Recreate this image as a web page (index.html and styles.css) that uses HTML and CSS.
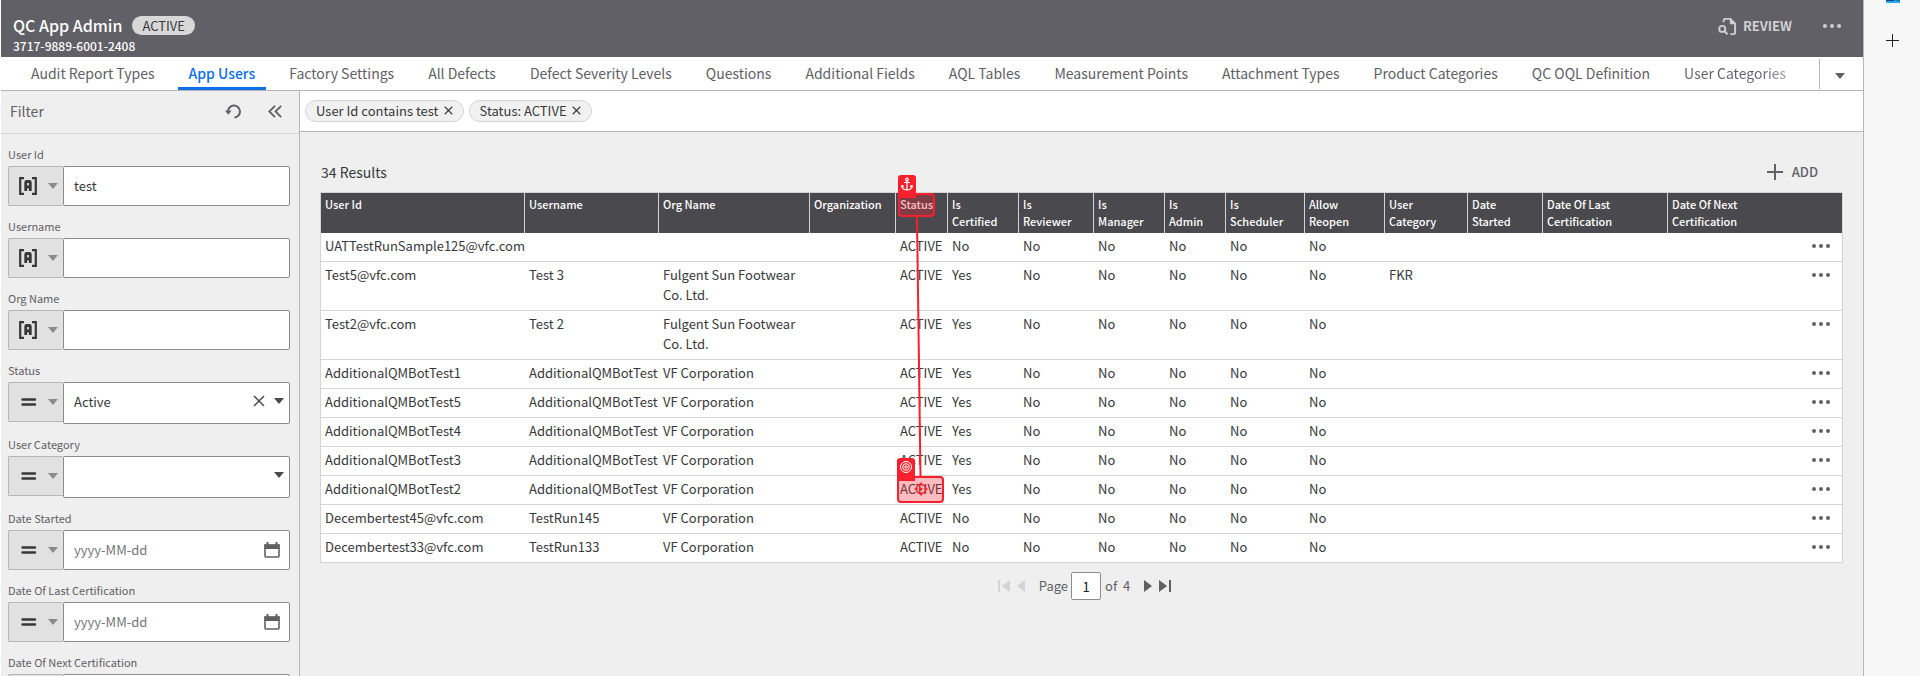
FILE: index.html
```html
<!DOCTYPE html>
<html lang="en">
<head>
<meta charset="utf-8">
<title>QC App Admin</title>
<link rel="stylesheet" href="styles.css">
</head>
<body>
<svg class="defs" aria-hidden="true">
  <symbol id="i-text" viewBox="0 0 18 18"><path d="M5 1.200H1.200V16.800H5M13 1.200h3.800V16.800H13" fill="none" stroke="currentColor" stroke-width="2.200"/><path d="M6.700 14V5.500Q6.700 4.500 7.700 4.500h2.600Q11.300 4.500 11.300 5.500V14M6.700 10h4.600" fill="none" stroke="currentColor" stroke-width="2.800"/></symbol>
  <symbol id="i-eq" viewBox="0 0 18 18"><path d="M3.500 6.500h12.500M3.500 11.500h12.500" stroke="currentColor" stroke-width="2.400" stroke-linecap="round"/></symbol>
  <symbol id="i-down" viewBox="0 0 10 6"><path d="M0 0h10L5 6z" fill="currentColor"/></symbol>
  <symbol id="i-x" viewBox="0 0 12 12"><path d="M1 1l10 10M11 1L1 11" stroke="currentColor" stroke-width="1.500"/></symbol>
  <symbol id="i-cal" viewBox="0 0 16 16"><path d="M1 3h14v11q0 1-1 1H2q-1 0-1-1z" fill="none" stroke="currentColor" stroke-width="1.600"/><path d="M0.500 2.500h15V7H.5zM2.500 0h2v3h-2zM11.500 0h2v3h-2z" fill="currentColor"/></symbol>
  <symbol id="i-dots" viewBox="0 0 18 4"><circle cx="2" cy="2" r="2" fill="currentColor"/><circle cx="9" cy="2" r="2" fill="currentColor"/><circle cx="16" cy="2" r="2" fill="currentColor"/></symbol>
</svg>
<div class="shell">
  <div class="app">
    <header class="header">
      <div>
        <div class="title-row"><h1 class="title">QC App Admin</h1><span class="badge">ACTIVE</span></div>
        <div class="code">3717-9889-6001-2408</div>
      </div>
      <div class="header-actions">
        <button class="review"><svg class="review-icon" viewBox="0 0 20 19" fill="none" stroke="currentColor"><path d="M6 5V3q0-1.500 1.500-1.500H13L18 6.500V16q0 1.500-1.500 1.500H13" stroke-width="2"/><path d="M12.500 1v6H18z" fill="currentColor" stroke="none"/><circle cx="4.500" cy="12" r="3.200" stroke-width="2"/><path d="M6.800 14.300L10 17.800" stroke-width="2.200"/></svg>REVIEW</button>
        <button class="plain" aria-label="More actions"><svg class="dots"><use href="#i-dots"/></svg></button>
      </div>
    </header>
    <nav class="tabs">
      <div class="tab-list">
        <a class="tab" href="#">Audit Report Types</a>
        <a class="tab tab-active" href="#">App Users</a>
        <a class="tab" href="#">Factory Settings</a>
        <a class="tab" href="#">All Defects</a>
        <a class="tab" href="#">Defect Severity Levels</a>
        <a class="tab" href="#">Questions</a>
        <a class="tab" href="#">Additional Fields</a>
        <a class="tab" href="#">AQL Tables</a>
        <a class="tab" href="#">Measurement Points</a>
        <a class="tab" href="#">Attachment Types</a>
        <a class="tab" href="#">Product Categories</a>
        <a class="tab" href="#">QC OQL Definition</a>
        <a class="tab tab-fade" href="#">User Categories</a>
      </div>
      <button class="tab-more" aria-label="More tabs"><svg class="caret"><use href="#i-down"/></svg></button>
    </nav>
    <div class="body">
      <aside class="filter">
        <div class="filter-head">
          <h2 class="filter-title">Filter</h2>
          <button class="plain" aria-label="Reset"><svg class="reset-icon" viewBox="0 0 17 15" fill="none" stroke="currentColor" stroke-width="2"><path d="M3 8A6 6 0 1 1 9.500 13.500"/><path d="M0 6.500h6.600L3.300 10.800z" fill="currentColor" stroke="none"/></svg></button>
          <button class="plain" aria-label="Collapse"><svg class="collapse-icon" viewBox="0 0 14 13" fill="none" stroke="currentColor" stroke-width="1.800"><path d="M7 .8L1.300 6.500L7 12.200M13.200 .8L7.500 6.500L13.200 12.200"/></svg></button>
        </div>
        <form class="fields">
          <div class="field"><label class="label" for="f1">User Id</label><div class="control"><button type="button" class="op" aria-label="Contains"><svg class="op-icon"><use href="#i-text"/></svg><svg class="op-caret"><use href="#i-down"/></svg></button><input class="box" id="f1" type="text" value="test"></div></div>
          <div class="field"><label class="label" for="f2">Username</label><div class="control"><button type="button" class="op" aria-label="Contains"><svg class="op-icon"><use href="#i-text"/></svg><svg class="op-caret"><use href="#i-down"/></svg></button><input class="box" id="f2" type="text"></div></div>
          <div class="field"><label class="label" for="f3">Org Name</label><div class="control"><button type="button" class="op" aria-label="Contains"><svg class="op-icon"><use href="#i-text"/></svg><svg class="op-caret"><use href="#i-down"/></svg></button><input class="box" id="f3" type="text"></div></div>
          <div class="field"><label class="label" for="f4">Status</label><div class="control"><button type="button" class="op" aria-label="Equals"><svg class="op-icon"><use href="#i-eq"/></svg><svg class="op-caret"><use href="#i-down"/></svg></button><select class="box box-select" id="f4"><option>Active</option></select><span class="adorn"><button type="button" class="plain" aria-label="Clear status"><svg class="clear"><use href="#i-x"/></svg></button><svg class="caret"><use href="#i-down"/></svg></span></div></div>
          <div class="field"><label class="label" for="f5">User Category</label><div class="control"><button type="button" class="op" aria-label="Equals"><svg class="op-icon"><use href="#i-eq"/></svg><svg class="op-caret"><use href="#i-down"/></svg></button><select class="box box-select" id="f5"><option></option></select><span class="adorn"><svg class="caret"><use href="#i-down"/></svg></span></div></div>
          <div class="field"><label class="label" for="f6">Date Started</label><div class="control"><button type="button" class="op" aria-label="Equals"><svg class="op-icon"><use href="#i-eq"/></svg><svg class="op-caret"><use href="#i-down"/></svg></button><input class="box" id="f6" type="text" placeholder="yyyy-MM-dd"><span class="adorn adorn-date"><svg class="cal"><use href="#i-cal"/></svg></span></div></div>
          <div class="field"><label class="label" for="f7">Date Of Last Certification</label><div class="control"><button type="button" class="op" aria-label="Equals"><svg class="op-icon"><use href="#i-eq"/></svg><svg class="op-caret"><use href="#i-down"/></svg></button><input class="box" id="f7" type="text" placeholder="yyyy-MM-dd"><span class="adorn adorn-date"><svg class="cal"><use href="#i-cal"/></svg></span></div></div>
          <div class="field"><label class="label" for="f8">Date Of Next Certification</label><div class="control"><button type="button" class="op" aria-label="Equals"></button><input class="box" id="f8" type="text"></div></div>
        </form>
      </aside>
      <main class="main">
        <div class="chips">
          <span class="chip">User Id contains test<button class="plain" aria-label="Remove User Id filter"><svg class="chip-x"><use href="#i-x"/></svg></button></span>
          <span class="chip">Status: ACTIVE<button class="plain" aria-label="Remove Status filter"><svg class="chip-x"><use href="#i-x"/></svg></button></span>
        </div>
        <section class="content">
          <div class="toolbar"><span class="results">34 Results</span><button class="add"><svg class="add-icon" viewBox="0 0 16 16"><path d="M8 0v16M0 8h16" stroke="currentColor" stroke-width="2"/></svg>ADD</button></div>
          <div class="grid">
            <table class="table">
              <colgroup><col class="c-id"><col class="c-name"><col class="c-org"><col class="c-orgn"><col class="c-status"><col class="c-flag"><col class="c-mid"><col class="c-flag"><col class="c-admin"><col class="c-sched"><col class="c-allow"><col class="c-cat"><col class="c-mid"><col class="c-date"><col></colgroup>
              <thead><tr><th>User Id</th><th>Username</th><th>Org Name</th><th>Organization</th><th>Status</th><th>Is<br>Certified</th><th>Is<br>Reviewer</th><th>Is<br>Manager</th><th>Is<br>Admin</th><th>Is<br>Scheduler</th><th>Allow<br>Reopen</th><th>User<br>Category</th><th>Date<br>Started</th><th>Date Of Last<br>Certification</th><th>Date Of Next<br>Certification</th></tr></thead>
              <tbody>
                <tr><td>UATTestRunSample125@vfc.com</td><td></td><td></td><td></td><td>ACTIVE</td><td>No</td><td>No</td><td>No</td><td>No</td><td>No</td><td>No</td><td></td><td></td><td></td><td class="menu"><button class="plain" aria-label="Row menu"><svg class="dots"><use href="#i-dots"/></svg></button></td></tr>
                <tr><td>Test5@vfc.com</td><td>Test 3</td><td class="wrap">Fulgent Sun Footwear Co. Ltd.</td><td></td><td>ACTIVE</td><td>Yes</td><td>No</td><td>No</td><td>No</td><td>No</td><td>No</td><td>FKR</td><td></td><td></td><td class="menu"><button class="plain" aria-label="Row menu"><svg class="dots"><use href="#i-dots"/></svg></button></td></tr>
                <tr><td>Test2@vfc.com</td><td>Test 2</td><td class="wrap">Fulgent Sun Footwear Co. Ltd.</td><td></td><td>ACTIVE</td><td>Yes</td><td>No</td><td>No</td><td>No</td><td>No</td><td>No</td><td></td><td></td><td></td><td class="menu"><button class="plain" aria-label="Row menu"><svg class="dots"><use href="#i-dots"/></svg></button></td></tr>
                <tr><td>AdditionalQMBotTest1</td><td>AdditionalQMBotTest</td><td>VF Corporation</td><td></td><td>ACTIVE</td><td>Yes</td><td>No</td><td>No</td><td>No</td><td>No</td><td>No</td><td></td><td></td><td></td><td class="menu"><button class="plain" aria-label="Row menu"><svg class="dots"><use href="#i-dots"/></svg></button></td></tr>
                <tr><td>AdditionalQMBotTest5</td><td>AdditionalQMBotTest</td><td>VF Corporation</td><td></td><td>ACTIVE</td><td>Yes</td><td>No</td><td>No</td><td>No</td><td>No</td><td>No</td><td></td><td></td><td></td><td class="menu"><button class="plain" aria-label="Row menu"><svg class="dots"><use href="#i-dots"/></svg></button></td></tr>
                <tr><td>AdditionalQMBotTest4</td><td>AdditionalQMBotTest</td><td>VF Corporation</td><td></td><td>ACTIVE</td><td>Yes</td><td>No</td><td>No</td><td>No</td><td>No</td><td>No</td><td></td><td></td><td></td><td class="menu"><button class="plain" aria-label="Row menu"><svg class="dots"><use href="#i-dots"/></svg></button></td></tr>
                <tr><td>AdditionalQMBotTest3</td><td>AdditionalQMBotTest</td><td>VF Corporation</td><td></td><td>ACTIVE</td><td>Yes</td><td>No</td><td>No</td><td>No</td><td>No</td><td>No</td><td></td><td></td><td></td><td class="menu"><button class="plain" aria-label="Row menu"><svg class="dots"><use href="#i-dots"/></svg></button></td></tr>
                <tr><td>AdditionalQMBotTest2</td><td>AdditionalQMBotTest</td><td>VF Corporation</td><td></td><td>ACTIVE</td><td>Yes</td><td>No</td><td>No</td><td>No</td><td>No</td><td>No</td><td></td><td></td><td></td><td class="menu"><button class="plain" aria-label="Row menu"><svg class="dots"><use href="#i-dots"/></svg></button></td></tr>
                <tr><td>Decembertest45@vfc.com</td><td>TestRun145</td><td>VF Corporation</td><td></td><td>ACTIVE</td><td>No</td><td>No</td><td>No</td><td>No</td><td>No</td><td>No</td><td></td><td></td><td></td><td class="menu"><button class="plain" aria-label="Row menu"><svg class="dots"><use href="#i-dots"/></svg></button></td></tr>
                <tr><td>Decembertest33@vfc.com</td><td>TestRun133</td><td>VF Corporation</td><td></td><td>ACTIVE</td><td>No</td><td>No</td><td>No</td><td>No</td><td>No</td><td>No</td><td></td><td></td><td></td><td class="menu"><button class="plain" aria-label="Row menu"><svg class="dots"><use href="#i-dots"/></svg></button></td></tr>
              </tbody>
            </table>
            <!-- anchor and target markers joined by a line -->
            <svg class="marks" viewBox="0 0 60 340" fill="none">
              <path d="M8 28V8q0-3 3-3h12q3 0 3 3v20z" fill="#f8202d"/>
              <rect x="9" y="24" width="35" height="22" rx="3" fill="#f8202d" fill-opacity=".3" stroke="#f8202d" stroke-width="2"/>
              <g stroke="#fff" stroke-width="1.200"><circle cx="17" cy="9.500" r="1.300"/><path d="M17 11v9M14 12.500h6M12 16q.5 4 5 4t5-4M11.500 17.500l.5-2 2 1M22.500 17.500l-.5-2-2 1"/></g>
              <path d="M27 47L30.500 306" stroke="#f8202d" stroke-width="2"/>
              <path d="M7 311V291q0-3 3-3h12q3 0 3 3v20z" fill="#f8202d"/>
              <rect x="8" y="307" width="45" height="25" rx="3" fill="#f8202d" fill-opacity=".3" stroke="#f8202d" stroke-width="2"/>
              <g stroke="#fff"><circle cx="16" cy="297" r="5.500"/><circle cx="16" cy="297" r="3.300"/><circle cx="16" cy="297" r="1.200"/></g>
              <g stroke="#f8202d" stroke-width="1.600"><circle cx="31" cy="319" r="4.600"/><path d="M31 312.500v3M31 322.500v3M24.500 319h3M34.500 319h3"/></g><circle cx="31" cy="319" r="1.500" fill="#f8202d"/>
            </svg>
          </div>
          <div class="pager">
            <button class="plain page-off" aria-label="First page"><svg class="p-end" viewBox="0 0 12 12"><path d="M0 0h2v12H0zM12 0v12L4 6z" fill="currentColor"/></svg></button>
            <button class="plain page-off" aria-label="Previous page"><svg class="p-step" viewBox="0 0 8 12"><path d="M8 0v12L0 6z" fill="currentColor"/></svg></button>
            <label class="page-label" for="page">Page</label><input class="page-input" id="page" type="text" value="1"><span>of&nbsp; 4</span>
            <button class="plain page-next" aria-label="Next page"><svg class="p-step" viewBox="0 0 8 12"><path d="M0 0v12L8 6z" fill="currentColor"/></svg></button>
            <button class="plain" aria-label="Last page"><svg class="p-end" viewBox="0 0 12 12"><path d="M10 0h2v12h-2zM0 0v12L8 6z" fill="currentColor"/></svg></button>
          </div>
        </section>
      </main>
    </div>
  </div>
  <div class="rail">
    <svg class="rail-app" viewBox="0 0 14 3"><path d="M0 0h14v3H0z" fill="#28a8ea"/><path d="M0 0h8v1H0z" fill="#14447d"/><path d="M8 0h6v2z" fill="#0f78d4"/></svg>
    <button class="plain rail-add" aria-label="Add"><svg class="rail-plus" viewBox="0 0 13 13"><path d="M6.500 0v13M0 6.500h13" stroke="currentColor"/></svg></button>
  </div>
</div>
</body>
</html>
```
FILE: styles.css
```css
* { box-sizing: border-box; }
body { margin: 0; font-family: "Noto Sans CJK SC", "Noto Sans", sans-serif; font-size: 13px; line-height: 20px; color: #38383b; background: #fff; }
button, input, select { font: inherit; color: inherit; }
svg { display: block; flex: none; }
.defs { position: absolute; width: 0; height: 0; }
.plain { display: flex; padding: 0; border: 0; background: none; color: inherit; }
.shell { display: flex; height: 100vh; overflow: hidden; padding-left: 1px; }
.app { flex: 1; min-width: 0; display: flex; flex-direction: column; border-right: 1px solid #b6b6b6; }

.header { flex: none; display: flex; justify-content: space-between; padding: 13px 22px 1px 12px; background: #616066; color: #fff; }
.title-row { display: flex; align-items: center; gap: 10px; height: 23px; }
.title { margin: 0; font-size: 16px; font-weight: 500; line-height: 22px; }
.badge { margin-top: 2px; padding: 0 10px; border-radius: 10px; background: #d8d8d8; color: #38383b; line-height: 19px; }
.code { font-size: 12px; font-weight: 500; line-height: 20px; }
.header-actions { display: flex; align-items: center; gap: 31px; height: 26px; color: #d0d0d2; }
.review { display: flex; align-items: center; gap: 6px; padding: 0; border: 0; background: none; font-weight: 700; }
.review-icon { width: 19px; height: 19px; }
.dots { width: 18px; height: 4px; }

.tabs { flex: none; display: flex; justify-content: space-between; height: 34px; border-bottom: 1px solid #b6b6b6; background: #fff; }
.tab-list { display: flex; gap: 12px; min-width: 0; padding-left: 19px; overflow: hidden; white-space: nowrap; }
.tab { padding: 4px 11px 0; color: #616066; font-size: 14px; line-height: 24px; text-decoration: none; border-bottom: 3px solid transparent; }
.tab-active { color: #0a6fe8; font-weight: 500; border-color: #0a6fe8; }
.tab-fade { background: linear-gradient(90deg, #616066 70%, #b8b8ba); background-clip: text; color: transparent; }
.tab-more { flex: none; width: 44px; margin: 2px 0 1px; padding: 4px 0 0 15px; border: 0; border-left: 1px solid #b6b6b6; background: none; color: #616066; }

.body { flex: 1; min-height: 0; display: flex; }
.filter { flex: none; width: 299px; border-right: 1px solid #b6b6b6; background: #efefef; overflow: hidden; }
.filter-head { display: flex; align-items: center; gap: 26px; height: 43px; padding: 0 17px 2px 9px; border-bottom: 1px solid #d4d4d4; color: #616066; }
.filter-title { flex: 1; margin: 0; font-size: 14px; font-weight: 400; }
.reset-icon { width: 17px; height: 15px; }
.collapse-icon { width: 14px; height: 13px; }
.fields { display: flex; flex-direction: column; gap: 13px; padding: 13px 9px 0 7px; }
.field { display: flex; flex-direction: column; gap: 5px; }
.label { font-size: 11px; line-height: 14px; color: #616066; }
.control { display: flex; align-items: flex-start; position: relative; }
.op { flex: none; display: flex; align-items: center; gap: 11px; width: 55px; height: 40px; padding: 0 5px 0 10px; border: 1px solid #b6b6b6; border-right: 0; border-radius: 2px 0 0 2px; background: #e1e1e1; }
.op-icon { width: 18px; height: 18px; }
.op-caret { width: 10px; height: 6px; color: #8a8a92; }
.box { flex: 1; min-width: 0; height: 40px; padding: 0 10px 2px; border: 1px solid #8c8c90; border-radius: 2px; background: #fff; }
.box::placeholder { color: #75757a; }
.box-select { appearance: none; height: 42px; }
.adorn { position: absolute; top: 0; right: 6px; height: 38px; display: flex; align-items: center; gap: 9px; color: #4a494e; }
.adorn-date { right: 10px; height: 40px; color: #616066; }
.clear { width: 12px; height: 12px; }
.caret { width: 10px; height: 6px; }
.cal { width: 16px; height: 16px; }

.main { flex: 1; min-width: 0; display: flex; flex-direction: column; background: #efefef; }
.chips { flex: none; display: flex; gap: 5px; height: 41px; padding: 9px 5px; border-bottom: 1px solid #b6b6b6; background: #fff; }
.chip { display: flex; align-items: center; gap: 5px; height: 22px; padding: 0 10px 1px; border: 1px solid #d4d4d4; border-radius: 11px; background: #f1f1f1; }
.chip-x { width: 9px; height: 9px; }
.content { padding: 28px 20px 0; }
.toolbar { display: flex; align-items: center; justify-content: space-between; height: 24px; margin-bottom: 8px; padding: 0 25px 0 1px; }
.results { font-size: 14px; }
.add { display: flex; align-items: center; gap: 9px; padding: 0; border: 0; background: none; color: #616066; font-weight: 500; }
.add-icon { width: 16px; height: 16px; }
.grid { position: relative; border: 1px solid #d4d4d4; border-bottom: 0; }
.table { width: 100%; table-layout: fixed; border-collapse: separate; border-spacing: 0; background: #fff; }
.c-id { width: 204px; } .c-name { width: 134px; } .c-org { width: 151px; } .c-orgn { width: 86px; }
.c-status { width: 52px; } .c-flag { width: 71px; } .c-mid { width: 75px; } .c-admin { width: 61px; }
.c-sched { width: 79px; } .c-allow { width: 80px; } .c-cat { width: 83px; } .c-date { width: 125px; }
th { height: 40px; padding: 3px 0 3px 4px; border-right: 1px solid #d4d4d4; background: #4a494e; color: #fff; font-size: 11px; font-weight: 500; line-height: 17px; text-align: left; vertical-align: top; white-space: nowrap; }
th:last-child { border-right: 0; }
td { padding: 3px 0 5px 4px; border-bottom: 1px solid #d4d4d4; vertical-align: top; white-space: nowrap; }
td.wrap { padding-right: 5px; white-space: normal; }
td.menu { padding: 11px 12px 0; color: #616066; }
td.menu .plain { margin-left: auto; }
.marks { position: absolute; left: 569px; top: -23px; width: 60px; height: 340px; pointer-events: none; }

.pager { display: flex; align-items: center; justify-content: center; gap: 7px; padding: 9px 0 0 6px; color: #616066; }
.page-off { color: #d4d4d4; }
.page-label { margin-left: 7px; }
.page-input { width: 30px; height: 28px; margin: 0 -3px 0 -4px; padding: 0; border: 1px solid #8c8c90; border-radius: 2px; background: #fff; color: #111; text-align: center; }
.page-next { margin-left: 7px; }
.p-end { width: 12px; height: 12px; }
.p-step { width: 8px; height: 12px; }

.rail { flex: none; width: 56px; display: flex; flex-direction: column; gap: 31px; padding-left: 22px; background: #f7f7f7; color: #222; }
.rail-app { width: 14px; height: 3px; }
.rail-plus { width: 13px; height: 13px; }
```
